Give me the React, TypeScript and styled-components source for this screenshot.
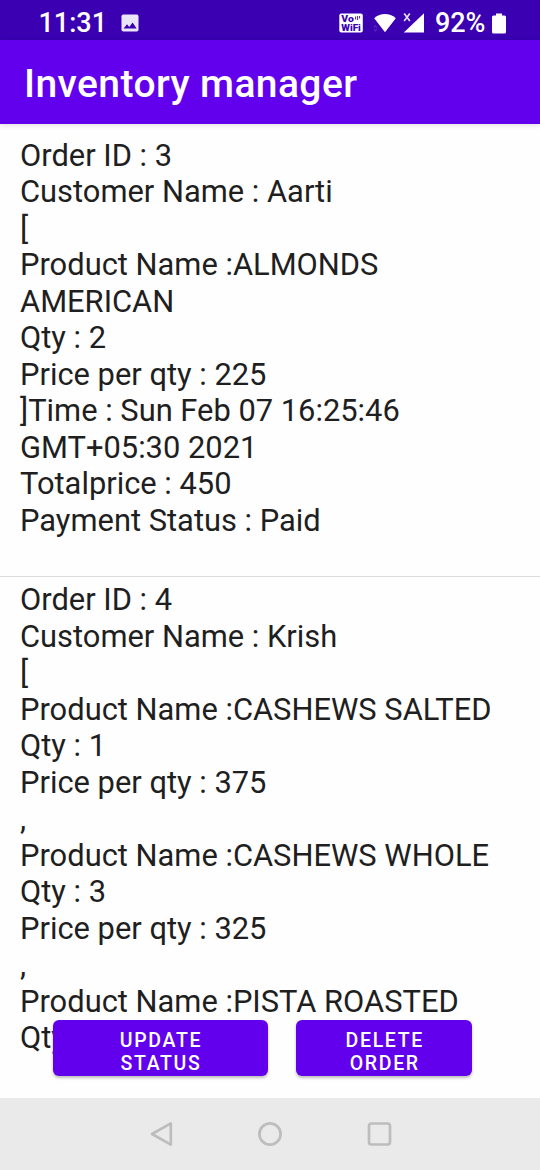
import React from "react";
import styled, { createGlobalStyle } from "styled-components";

const GlobalStyle = createGlobalStyle`
  * { box-sizing: border-box; }
  html, body { margin: 0; padding: 0; background: #fefefe; }
  body { font-family: Roboto, sans-serif; overflow: hidden; }
`;

const Screen = styled.div`
  width: 540px;
  height: 1170px;
  display: flex;
  flex-direction: column;
  overflow: hidden;
  background: #fefefe;
`;

const StatusBar = styled.header`
  flex: none;
  height: 40px;
  padding: 6px 34px 0 38.5px;
  display: flex;
  align-items: center;
  background: #3a00b2;
  color: #fff;
`;

const Clock = styled.span`
  width: 82px;
  font-size: 27px;
  font-weight: 500;
  line-height: 34px;
`;

const StatusIcons = styled.div`
  margin-left: auto;
  display: flex;
  align-items: center;
`;

const Battery = styled.span`
  width: 57px;
  font-size: 27px;
  font-weight: 500;
  line-height: 34px;
  letter-spacing: -0.1px;
  white-space: nowrap;
`;

const Glyph = styled.svg<{ $gap?: number }>`
  display: block;
  flex: none;
  margin-right: ${(p) => p.$gap ?? 0}px;
`;

const AppBar = styled.div`
  flex: none;
  height: 84px;
  padding: 4px 24px 0;
  display: flex;
  align-items: center;
  background: #6200ee;
  color: #fff;
  box-shadow: 0 1px 5px rgba(0, 0, 0, 0.14);
  z-index: 1;
`;

const Title = styled.h1`
  margin: 0;
  font-size: 39px;
  font-weight: 500;
  line-height: 46px;
  letter-spacing: 0.4px;
  white-space: nowrap;
`;

const Content = styled.main`
  flex: 1;
  min-height: 0;
  position: relative;
  overflow: hidden;
`;

const Order = styled.section<{ $top: number }>`
  padding: ${(p) => p.$top}px 20px 0.5px;
  font-size: 30.87px;
  line-height: 36.5px;
  color: #1f1f1f;

  & + & {
    border-top: 1px solid #dcdcdc;
  }
`;

const Line = styled.div`
  min-height: 36.5px;
  white-space: nowrap;
`;

const Actions = styled.div`
  position: absolute;
  left: 53px;
  bottom: 22px;
  display: flex;
  gap: 28.5px;
`;

const ActionButton = styled.button<{ $width: number }>`
  width: ${(p) => p.$width}px;
  height: 56px;
  padding: 9px 0 1px 1.5px;
  border: 0;
  border-radius: 6px;
  background: #6200ee;
  box-shadow: 0 2px 3px rgba(0, 0, 0, 0.26);
  display: block;
`;

const ButtonText = styled.span`
  display: block;
  height: 46px;
  color: #fff;
  font-family: Roboto, sans-serif;
  font-size: 19.5px;
  font-weight: 500;
  line-height: 23px;
  letter-spacing: 1.65px;
  text-align: center;
  white-space: pre-line;
`;

const NavBar = styled.nav`
  flex: none;
  height: 72px;
  padding: 0 148px;
  display: flex;
  align-items: center;
  justify-content: space-between;
  background: #eaeaea;
`;

const orders = [
  {
    top: 13.5,
    lines: [
      "Order ID : 3",
      "Customer Name : Aarti",
      "[",
      "Product Name :ALMONDS",
      "AMERICAN",
      "Qty : 2",
      "Price per qty : 225",
      "]Time : Sun Feb 07 16:25:46",
      "GMT+05:30 2021",
      "Totalprice : 450",
      "Payment Status : Paid",
      "",
    ],
  },
  {
    top: 5,
    lines: [
      "Order ID : 4",
      "Customer Name : Krish",
      "[",
      "Product Name :CASHEWS SALTED",
      "Qty : 1",
      "Price per qty : 375",
      ",",
      "Product Name :CASHEWS WHOLE",
      "Qty : 3",
      "Price per qty : 325",
      ",",
      "Product Name :PISTA ROASTED",
      "Qty : 1",
    ],
  },
];

const PictureIcon = () => (
  <Glyph width="18" height="18" viewBox="0 0 18 18">
    <rect x="0.5" y="0.5" width="17" height="17" rx="1.8" fill="#ebe5f8" />
    <path d="M2.6 14.5 6 10.2l2.3 2.7 3.3-4.3 4 5.9z" fill="#3a00b2" />
  </Glyph>
);

const VoWifiIcon = () => (
  <Glyph $gap={10} width="24" height="20" viewBox="0 0 24 20">
    <rect x="0.3" y="0.5" width="23.5" height="19" rx="2" fill="#fff" />
    <g fill="#3a00b2" fontFamily="Roboto, sans-serif" fontWeight="900" fontSize="8.8">
      <text x="2.3" y="8.7" textLength="12.5" lengthAdjust="spacingAndGlyphs">Vo</text>
      <text x="2.3" y="17.7" textLength="19.5" lengthAdjust="spacingAndGlyphs">WiFi</text>
    </g>
    <path d="M16.6 3.5v3M18.6 3v4M20.6 3v2.5" stroke="#3a00b2" strokeWidth="0.9" />
  </Glyph>
);

const WifiIcon = () => (
  <Glyph $gap={6} width="24" height="20" viewBox="0 0 24 20">
    <path d="M1.2 5.2C4.5 1.9 8 .9 12 .9s7.5 1 10.8 4.3L12 19.2z" fill="#fff" />
    <path d="M1 14.3 2.400 13 3.800 14.300M1 16.500 2.400 17.800 3.800 16.500" fill="none" stroke="#7654cd" strokeWidth="0.9" />
  </Glyph>
);

const SignalIcon = () => (
  <Glyph $gap={10} width="22" height="20" viewBox="0 0 22 20">
    <path d="M21 .2V19.5H.8z" fill="#fff" />
    <path d="M1.2.6 6.800 7.900M6.800.6 1.200 7.900" stroke="#e6e0f7" strokeWidth="1.7" />
  </Glyph>
);

const BatteryIcon = () => (
  <Glyph width="14" height="21" viewBox="0 0 14 21">
    <path d="M4 .5h6v2h2.500q1.500 0 1.500 1.500v15q0 1.500-1.500 1.500h-11Q0 20.500 0 19V4q0-1.500 1.500-1.500H4z" fill="#fff" />
  </Glyph>
);

export default function App() {
  return (
    <Screen>
      <GlobalStyle />
      <StatusBar>
        <Clock>11:31</Clock>
        <PictureIcon />
        <StatusIcons>
          <VoWifiIcon />
          <WifiIcon />
          <SignalIcon />
          <Battery>92%</Battery>
          <BatteryIcon />
        </StatusIcons>
      </StatusBar>
      <AppBar>
        <Title>Inventory manager</Title>
      </AppBar>
      <Content>
        {orders.map((order) => (
          <Order key={order.lines[0]} $top={order.top}>
            {order.lines.map((line, i) => (
              <Line key={i}>{line}</Line>
            ))}
          </Order>
        ))}
        <Actions>
          <ActionButton $width={214.5}>
            <ButtonText>{"UPDATE\nSTATUS"}</ButtonText>
          </ActionButton>
          <ActionButton $width={176}>
            <ButtonText>{"DELETE\nORDER"}</ButtonText>
          </ActionButton>
        </Actions>
      </Content>
      <NavBar>
        <Glyph width="26" height="26" viewBox="0 0 26 26">
          <path d="M4 13 22.8 2.4V23.600z" fill="none" stroke="#bdbdbd" strokeWidth="2.7" strokeLinejoin="round" />
        </Glyph>
        <Glyph width="26" height="26" viewBox="0 0 26 26">
          <circle cx="13" cy="13" r="10.6" fill="none" stroke="#bdbdbd" strokeWidth="2.7" />
        </Glyph>
        <Glyph width="26" height="26" viewBox="0 0 26 26">
          <rect x="3" y="2.5" width="21" height="21" rx="2.5" fill="none" stroke="#bdbdbd" strokeWidth="2.7" />
        </Glyph>
      </NavBar>
    </Screen>
  );
}
